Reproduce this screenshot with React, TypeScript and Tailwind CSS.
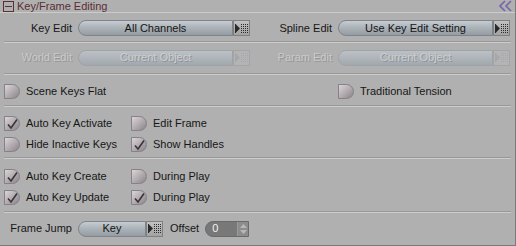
import React from 'react';

const font = { fontFamily: '"Liberation Sans", Arial, sans-serif' };

function MenuIcon({ disabled }: { disabled?: boolean }) {
  const c = disabled ? '#a4a8ac' : '#2a2a2a';
  const dots = [];
  for (let r = 0; r < 5; r++) {
    for (let k = 0; k < 4; k++) {
      dots.push(<rect key={`${r}-${k}`} x={6 + k * 2} y={1 + r * 2} width="1" height="1" fill={c} />);
    }
  }
  return (
    <svg width="14" height="11" viewBox="0 0 14 11">
      <rect x="0" y="1" width="1" height="9" fill={c} />
      <polygon points="1,1.5 5,5.5 1,9.5" fill={c} />
      {dots}
    </svg>
  );
}

function Dropdown({ value, width, disabled }: { value: string; width: number; disabled?: boolean }) {
  return (
    <div className="flex h-[16px]">
      <div
        style={{ width }}
        className={`flex items-center justify-center rounded-l-full border text-[11px] ${
          disabled
            ? 'border-[#9ea3a8] bg-gradient-to-b from-[#bcc1c6] to-[#a1a8ae] text-[#cdcfd1] [text-shadow:1px_1px_0_#8e9398]'
            : 'border-[#7e848a] bg-gradient-to-b from-[#c6ccd1] via-[#aab1b7] to-[#959ca3] text-[#141414]'
        }`}
      >
        {value}
      </div>
      <div
        className={`flex h-[16px] w-[17px] items-center justify-center border ${
          disabled ? 'border-[#a4a4a4] bg-[#b4b4b4]' : 'border-[#808080] bg-gradient-to-b from-[#c2c2c2] to-[#a2a2a2]'
        }`}
      >
        <MenuIcon disabled={disabled} />
      </div>
    </div>
  );
}

function Check({ checked, label }: { checked?: boolean; label: string }) {
  return (
    <div className="flex h-[21px] items-center">
      <div className="relative h-[15px] w-[16px] rounded-r-full border border-[#858185] bg-gradient-to-br from-[#dcd5d8] via-[#b3acb0] to-[#8a8387]">
        {checked && (
          <svg className="absolute left-[1px] top-[1px]" width="13" height="12" viewBox="0 0 13 12">
            <path d="M2 6.5 L5 10 L11 1.5" fill="none" stroke="#3a3438" strokeWidth="1.6" />
          </svg>
        )}
      </div>
      <span className="ml-[6px] text-[11px] text-[#161616]">{label}</span>
    </div>
  );
}

function Sep() {
  return <div className="mx-[4px] h-0 border-t border-b border-t-[#989898] border-b-[#cdcdcd]" />;
}

function LabeledDropdown({ label, value, disabled }: { label: string; value: string; disabled?: boolean }) {
  return (
    <div className="flex w-[250px] items-center">
      <span
        className={`w-[72px] text-right text-[11px] ${
          disabled ? 'text-[#cacaca] [text-shadow:1px_1px_0_#969696]' : 'text-[#161616]'
        }`}
      >
        {label}
      </span>
      <div className="ml-[6px]">
        <Dropdown value={value} width={155} disabled={disabled} />
      </div>
    </div>
  );
}

export default function App() {
  return (
    <div style={font} className="flex h-[246px] w-[516px] flex-col border-b border-r border-[#7a7a7a] bg-[#b0b0b0]">
      <div className="flex h-[13px] items-center border-b border-[#cbcbcb]">
        <div className="ml-[3px] flex h-[11px] w-[11px] items-center justify-center border border-[#5b2e35]">
          <div className="h-[1px] w-[7px] bg-[#5b2e35]" />
        </div>
        <span className="ml-[3px] text-[11px] leading-none text-[#5b2e35]">Key/Frame Editing</span>
        <svg className="ml-auto mr-[2px]" width="14" height="12" viewBox="0 0 14 12">
          <path d="M6 1 L1 6 L6 11" fill="none" stroke="#7864a8" strokeWidth="1.6" />
          <path d="M12 1 L7 6 L12 11" fill="none" stroke="#7864a8" strokeWidth="1.6" />
        </svg>
      </div>

      <div className="flex h-[28px] items-center gap-[10px] pt-[2px]">
        <LabeledDropdown label="Key Edit" value="All Channels" />
        <LabeledDropdown label="Spline Edit" value="Use Key Edit Setting" />
      </div>
      <Sep />
      <div className="flex h-[30px] items-center gap-[10px] pb-[1px]">
        <LabeledDropdown label="World Edit" value="Current Object" disabled />
        <LabeledDropdown label="Param Edit" value="Current Object" disabled />
      </div>
      <Sep />
      <div className="flex h-[30px] items-center pt-[3px]">
        <div className="ml-[4px] w-[334px]">
          <Check label="Scene Keys Flat" />
        </div>
        <Check label="Traditional Tension" />
      </div>
      <Sep />
      <div className="flex h-[50px] items-start pt-[6px]">
        <div className="ml-[4px] w-[127px]">
          <Check checked label="Auto Key Activate" />
          <Check label="Hide Inactive Keys" />
        </div>
        <div>
          <Check label="Edit Frame" />
          <Check checked label="Show Handles" />
        </div>
      </div>
      <Sep />
      <div className="flex h-[52px] items-start pt-[7px]">
        <div className="ml-[4px] w-[127px]">
          <Check checked label="Auto Key Create" />
          <Check checked label="Auto Key Update" />
        </div>
        <div>
          <Check label="During Play" />
          <Check checked label="During Play" />
        </div>
      </div>
      <Sep />
      <div className="flex flex-1 items-center pb-[1px]">
        <span className="w-[72px] text-right text-[11px] text-[#161616]">Frame Jump</span>
        <div className="ml-[6px]">
          <Dropdown value="Key" width={68} />
        </div>
        <span className="ml-[7px] text-[11px] text-[#161616]">Offset</span>
        <div className="ml-[6px] flex h-[16px] w-[44px] items-center overflow-hidden rounded-l-full border border-[#6a6a6a] bg-[#787878]">
          <span className="ml-[6px] flex-1 text-[11px] text-[#f2f2f2]">0</span>
          <div className="flex h-full w-[11px] flex-col items-center justify-center gap-[2px] border-l border-[#9a9a9a] bg-[#8c8c8c]">
            <svg width="7" height="4" viewBox="0 0 7 4"><polygon points="0,4 3.5,0 7,4" fill="#b8b8b8" /></svg>
            <svg width="7" height="4" viewBox="0 0 7 4"><polygon points="0,0 3.5,4 7,0" fill="#b8b8b8" /></svg>
          </div>
        </div>
      </div>
    </div>
  );
}
